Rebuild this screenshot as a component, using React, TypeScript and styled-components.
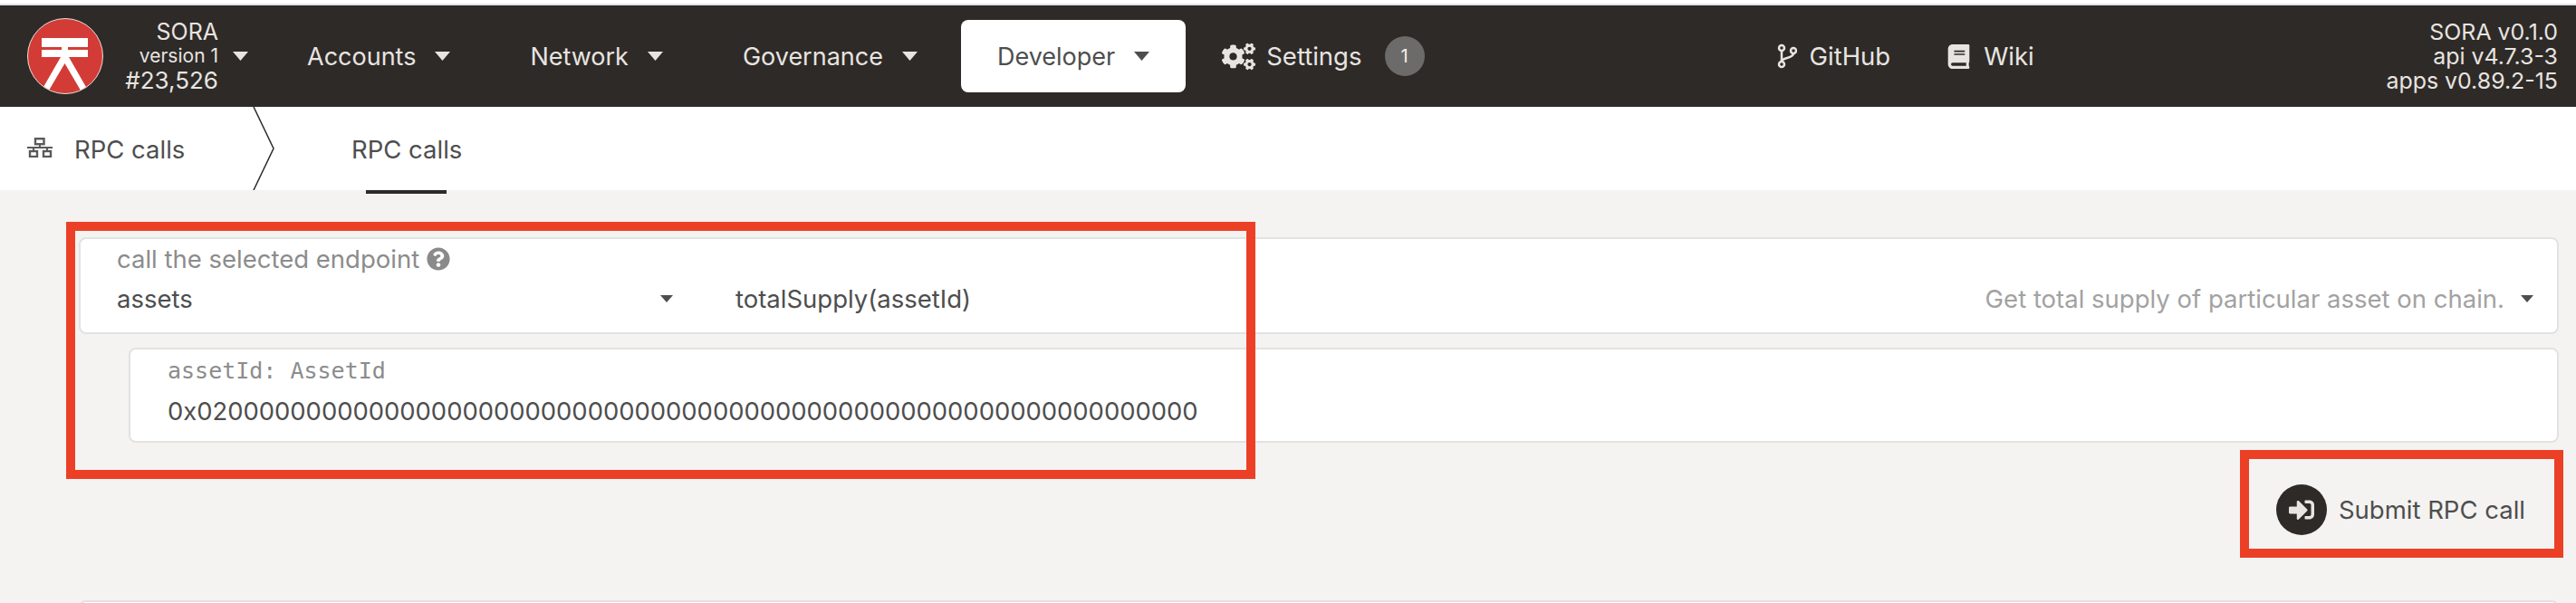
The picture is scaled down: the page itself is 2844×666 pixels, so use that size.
import styled, { createGlobalStyle } from 'styled-components'
import { FaBook, FaCogs, FaQuestionCircle, FaSignInAlt } from 'react-icons/fa'

const navItems = ['Accounts', 'Network', 'Governance']
const hexValue = '0x' + '02' + '0'.repeat(62)

function Caret({ small }: { small?: boolean }) {
  return (
    <CaretIcon $small={small} viewBox="0 0 16 9" preserveAspectRatio="none">
      <path d="M0 0h16L8 9z" fill="currentColor" />
    </CaretIcon>
  )
}

function SoraLogo() {
  return (
    <Logo viewBox="0 0 84 84">
      <defs>
        <clipPath id="sora-disc">
          <circle cx="42" cy="42" r="41" />
        </clipPath>
      </defs>
      <circle cx="42" cy="42" r="41.5" fill="#d33c36" stroke="#e8e0dc" strokeWidth="1" />
      <g clipPath="url(#sora-disc)" fill="#fff">
        <path d="M16 22h51v10H16zM16 35h51v8H16z" />
        <path d="M38 30h7v13h-7z" />
        <path d="M37 43h9L73 90h-8L41.500 50 18 90h-8z" />
      </g>
    </Logo>
  )
}

function NetworkIcon() {
  return (
    <BreadcrumbIcon viewBox="0 0 28 22" fill="none" stroke="#5a5a5a" strokeWidth="2.400">
      <rect x="9" y="1.200" width="9.500" height="6" />
      <rect x="3" y="15" width="8" height="6" />
      <rect x="18" y="15" width="8" height="6" />
      <path d="M14 7v4M0 11h28M7 11v4M22 11v4" strokeWidth="2" />
    </BreadcrumbIcon>
  )
}

function BranchIcon() {
  return (
    <LinkIcon viewBox="0 0 22 28" fill="none" stroke="currentColor" strokeWidth="2.500">
      <circle cx="5" cy="5" r="3" />
      <circle cx="5" cy="23" r="3" />
      <circle cx="18" cy="8" r="3" />
      <path d="M5 8v12M18 11c0 6-13 4-13 9" />
    </LinkIcon>
  )
}

export default function App() {
  return (
    <Page>
      <GlobalStyle />
      <TopBar>
        <ChainInfo>
          <SoraLogo />
          <ChainText>
            <ChainName>SORA</ChainName>
            <ChainVersion>version 1</ChainVersion>
            <ChainBlock>#23,526</ChainBlock>
          </ChainText>
          <ChainCaret>
            <Caret />
          </ChainCaret>
        </ChainInfo>
        <NavGroup>
          {navItems.map((item) => (
            <NavItem key={item}>
              {item}
              <Caret />
            </NavItem>
          ))}
          <NavItem $active>
            Developer
            <Caret />
          </NavItem>
          <SettingsItem>
            <FaCogs size={37} />
            Settings
            <Badge>1</Badge>
          </SettingsItem>
        </NavGroup>
        <LinkGroup>
          <NavLink>
            <BranchIcon />
            GitHub
          </NavLink>
          <NavLink>
            <FaBook size={27} />
            Wiki
          </NavLink>
        </LinkGroup>
        <Versions>
          <div>SORA v0.1.0</div>
          <div>api v4.7.3-3</div>
          <div>apps v0.89.2-15</div>
        </Versions>
      </TopBar>
      <SubBar>
        <TabHead>
          <NetworkIcon />
          RPC calls
        </TabHead>
        <Chevron viewBox="0 0 24 92" preserveAspectRatio="none">
          <path d="M1 0l22 46L1 92" fill="none" stroke="#2e2a27" strokeWidth="1.500" />
        </Chevron>
        <Tab>RPC calls</Tab>
      </SubBar>
      <Content>
        <SelectCard>
          <SelectLabel>
            call the selected endpoint
            <HelpIcon>
              <FaQuestionCircle size={26} />
            </HelpIcon>
          </SelectLabel>
          <SelectRow>
            <SectionSelect>
              assets
              <Caret small />
            </SectionSelect>
            <MethodValue>totalSupply(assetId)</MethodValue>
            <MethodDesc>Get total supply of particular asset on chain.</MethodDesc>
            <Caret small />
          </SelectRow>
        </SelectCard>
        <ParamCard>
          <ParamLabel>assetId: AssetId</ParamLabel>
          <ParamValue>{hexValue}</ParamValue>
        </ParamCard>
        <ButtonRow>
          <SubmitButton>
            <SubmitIcon>
              <FaSignInAlt size={28} />
            </SubmitIcon>
            Submit RPC call
          </SubmitButton>
        </ButtonRow>
        <NextCard />
      </Content>
      <EndpointMark />
      <SubmitMark />
    </Page>
  )
}

const GlobalStyle = createGlobalStyle`
  html, body {
    margin: 0;
    padding: 0;
    background: #f4f3f1;
  }
  body {
    font-family: Inter, "Liberation Sans", sans-serif;
    color: #4e4e4e;
    overflow: hidden;
  }
`
const Page = styled.div`
  position: relative;
  width: 2844px;
  height: 666px;
  overflow: hidden;
  border-top: 4px solid #fff;
  box-sizing: border-box;
`
const TopBar = styled.header`
  display: flex;
  align-items: center;
  height: 112px;
  border-top: 2px solid #e3e3ea;
  box-sizing: content-box;
  background: #2e2a27;
  color: #e8e4e1;
`
const ChainInfo = styled.div`
  display: flex;
  align-items: center;
  width: 299px;
  padding-left: 30px;
  box-sizing: border-box;
`
const Logo = styled.svg`
  width: 84px;
  height: 84px;
  flex-shrink: 0;
`
const ChainText = styled.div`
  width: 127px;
  text-align: right;
`
const ChainName = styled.div`
  font-size: 25px;
  line-height: 27px;
`
const ChainVersion = styled.div`
  font-size: 21px;
  line-height: 26px;
`
const ChainBlock = styled.div`
  font-size: 26px;
  line-height: 28px;
`
const ChainCaret = styled.div`
  display: flex;
  margin-left: 16px;
`
const CaretIcon = styled.svg<{ $small?: boolean }>`
  width: ${(p) => (p.$small ? 14 : 17)}px;
  height: ${(p) => (p.$small ? 8 : 10)}px;
  flex-shrink: 0;
`
const NavGroup = styled.nav`
  display: flex;
  align-items: center;
  gap: 8px;
`
const NavItem = styled.div<{ $active?: boolean }>`
  display: flex;
  align-items: center;
  gap: 21px;
  height: 80px;
  padding: 0 40px;
  border-radius: 8px;
  font-size: 27px;
  background: ${(p) => (p.$active ? '#fff' : 'transparent')};
  color: ${(p) => (p.$active ? '#4e4e4e' : '#e8e4e1')};
`
const SettingsItem = styled.div`
  display: flex;
  align-items: center;
  gap: 12px;
  margin-left: 32px;
  font-size: 27.500px;
`
const Badge = styled.span`
  display: flex;
  align-items: center;
  justify-content: center;
  width: 44px;
  height: 44px;
  margin-left: 13px;
  border-radius: 50%;
  background: #6d6b69;
  color: #f2f2f2;
  font-size: 20px;
`
const LinkGroup = styled.div`
  display: flex;
  align-items: center;
  gap: 62px;
  margin-left: 389px;
`
const NavLink = styled.div`
  display: flex;
  align-items: center;
  gap: 14px;
  font-size: 27.500px;
`
const LinkIcon = styled.svg`
  width: 22px;
  height: 28px;
`
const Versions = styled.div`
  margin-left: auto;
  padding-right: 20px;
  font-size: 24.900px;
  line-height: 27px;
  text-align: right;
`
const SubBar = styled.div`
  display: flex;
  align-items: center;
  height: 92px;
  background: #fff;
  font-size: 27.500px;
`
const TabHead = styled.div`
  display: flex;
  align-items: center;
  gap: 24px;
  width: 279px;
  padding: 2px 0 0 30px;
  box-sizing: border-box;
`
const BreadcrumbIcon = styled.svg`
  width: 28px;
  height: 22px;
  margin-top: -4px;
`
const Chevron = styled.svg`
  width: 24px;
  height: 92px;
`
const Tab = styled.div`
  position: relative;
  height: 92px;
  line-height: 95px;
  margin-left: 85px;

  &::after {
    content: '';
    position: absolute;
    left: 16px;
    right: 17px;
    bottom: -4px;
    height: 4px;
    background: #2e2a27;
  }
`
const Content = styled.main`
  padding: 52px 19px 0 87px;
`
const Card = styled.section`
  background: #fff;
  border: 2px solid #e2e2e2;
  border-radius: 8px;
  box-sizing: border-box;
`
const SelectCard = styled(Card)`
  height: 107px;
  padding: 8px 26px 0 40px;
`
const SelectLabel = styled.div`
  display: flex;
  align-items: center;
  gap: 8px;
  height: 28px;
  color: #8c8c8c;
  font-size: 27.500px;
`
const HelpIcon = styled.span`
  display: flex;
  color: #8a8a8a;
`
const SelectRow = styled.div`
  display: flex;
  align-items: center;
  height: 60px;
  font-size: 27.500px;
`
const SectionSelect = styled.div`
  display: flex;
  align-items: center;
  justify-content: space-between;
  width: 614px;
`
const MethodValue = styled.div`
  margin-left: 69px;
`
const MethodDesc = styled.div`
  margin-left: auto;
  margin-right: 18px;
  color: #a2a2a2;
`
const ParamCard = styled(Card)`
  height: 105px;
  margin: 15px 0 0 55px;
  padding: 9px 0 0 41px;
`
const ParamLabel = styled.div`
  height: 30px;
  line-height: 30px;
  color: #8c8c8c;
  font-family: "DejaVu Sans Mono", "Liberation Mono", monospace;
  font-size: 25px;
`
const ParamValue = styled.div`
  height: 50px;
  margin-top: 4px;
  line-height: 50px;
  font-size: 27.400px;
`
const ButtonRow = styled.div`
  display: flex;
  justify-content: flex-end;
  margin-top: 46px;
`
const SubmitButton = styled.div`
  display: flex;
  align-items: center;
  gap: 13px;
  padding-right: 37px;
  font-size: 27.500px;
`
const SubmitIcon = styled.span`
  display: flex;
  align-items: center;
  justify-content: center;
  width: 56px;
  height: 56px;
  border-radius: 50%;
  background: #2e2a27;
  color: #e8e4e1;
`
const NextCard = styled(Card)`
  height: 60px;
  margin-top: 72px;
`
// hand-drawn annotation boxes sitting on top of the screenshot
const EndpointMark = styled.div`
  position: absolute;
  left: 73px;
  top: 241px;
  width: 1313px;
  height: 284px;
  border: 10px solid #ec4026;
  box-sizing: border-box;
`
const SubmitMark = styled.div`
  position: absolute;
  left: 2473px;
  top: 493px;
  width: 357px;
  height: 119px;
  border: 10px solid #ec4026;
  box-sizing: border-box;
`
